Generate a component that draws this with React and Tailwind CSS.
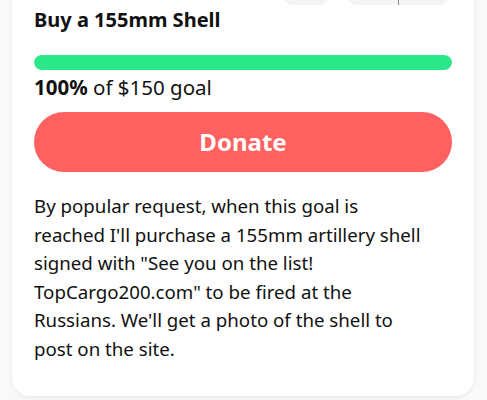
import React from 'react';

const App = () => {
  return (
    <div className="h-[400px] overflow-hidden bg-[#f9f9f9] px-[12px]" style={{ fontFamily: '"Noto Sans", "Open Sans", sans-serif' }}>
      <div className="-mt-[40px] bg-white rounded-[18px] shadow-[0_1px_4px_rgba(0,0,0,0.08)] px-[22px] pt-[2px] pb-[32px] w-[462px]">
        {/* top pills, cut off by the viewport */}
        <div className="flex justify-end gap-[16px] h-[43px] pr-[2px]">
          <div className="w-[48px] h-[43px] rounded-[12px] bg-[#f4f4f6]" />
          <div className="w-[104px] h-[43px] rounded-[12px] bg-[#f4f4f6] flex">
            <div className="w-[53px] border-r border-[#8a8a8a]" />
          </div>
        </div>

        <h2 className="mt-[2px] text-[20px] font-bold text-[#111] leading-[26px]">Buy a 155mm Shell</h2>

        <div className="mt-[22px] h-[15px] rounded-full bg-[#e6e6e6] overflow-hidden">
          <div className="h-full rounded-full bg-[#2ae88a]" style={{ width: '100%' }} />
        </div>
        <p className="mt-[4px] text-[20.5px] leading-[26px] text-[#111]">
          <span className="font-bold">100%</span> of $150 goal
        </p>

        <button className="mt-[12px] w-full h-[60px] rounded-full bg-[#ff6060] text-white text-[24px] font-bold">
          Donate
        </button>

        <p className="mt-[20px] text-[18.7px] leading-[28.6px] text-[#111] whitespace-nowrap">
          By popular request, when this goal is<br />
          reached I'll purchase a 155mm artillery shell<br />
          signed with "See you on the list!<br />
          TopCargo200.com" to be fired at the<br />
          Russians. We'll get a photo of the shell to<br />
          post on the site.
        </p>
      </div>
    </div>
  );
};

export default App;
